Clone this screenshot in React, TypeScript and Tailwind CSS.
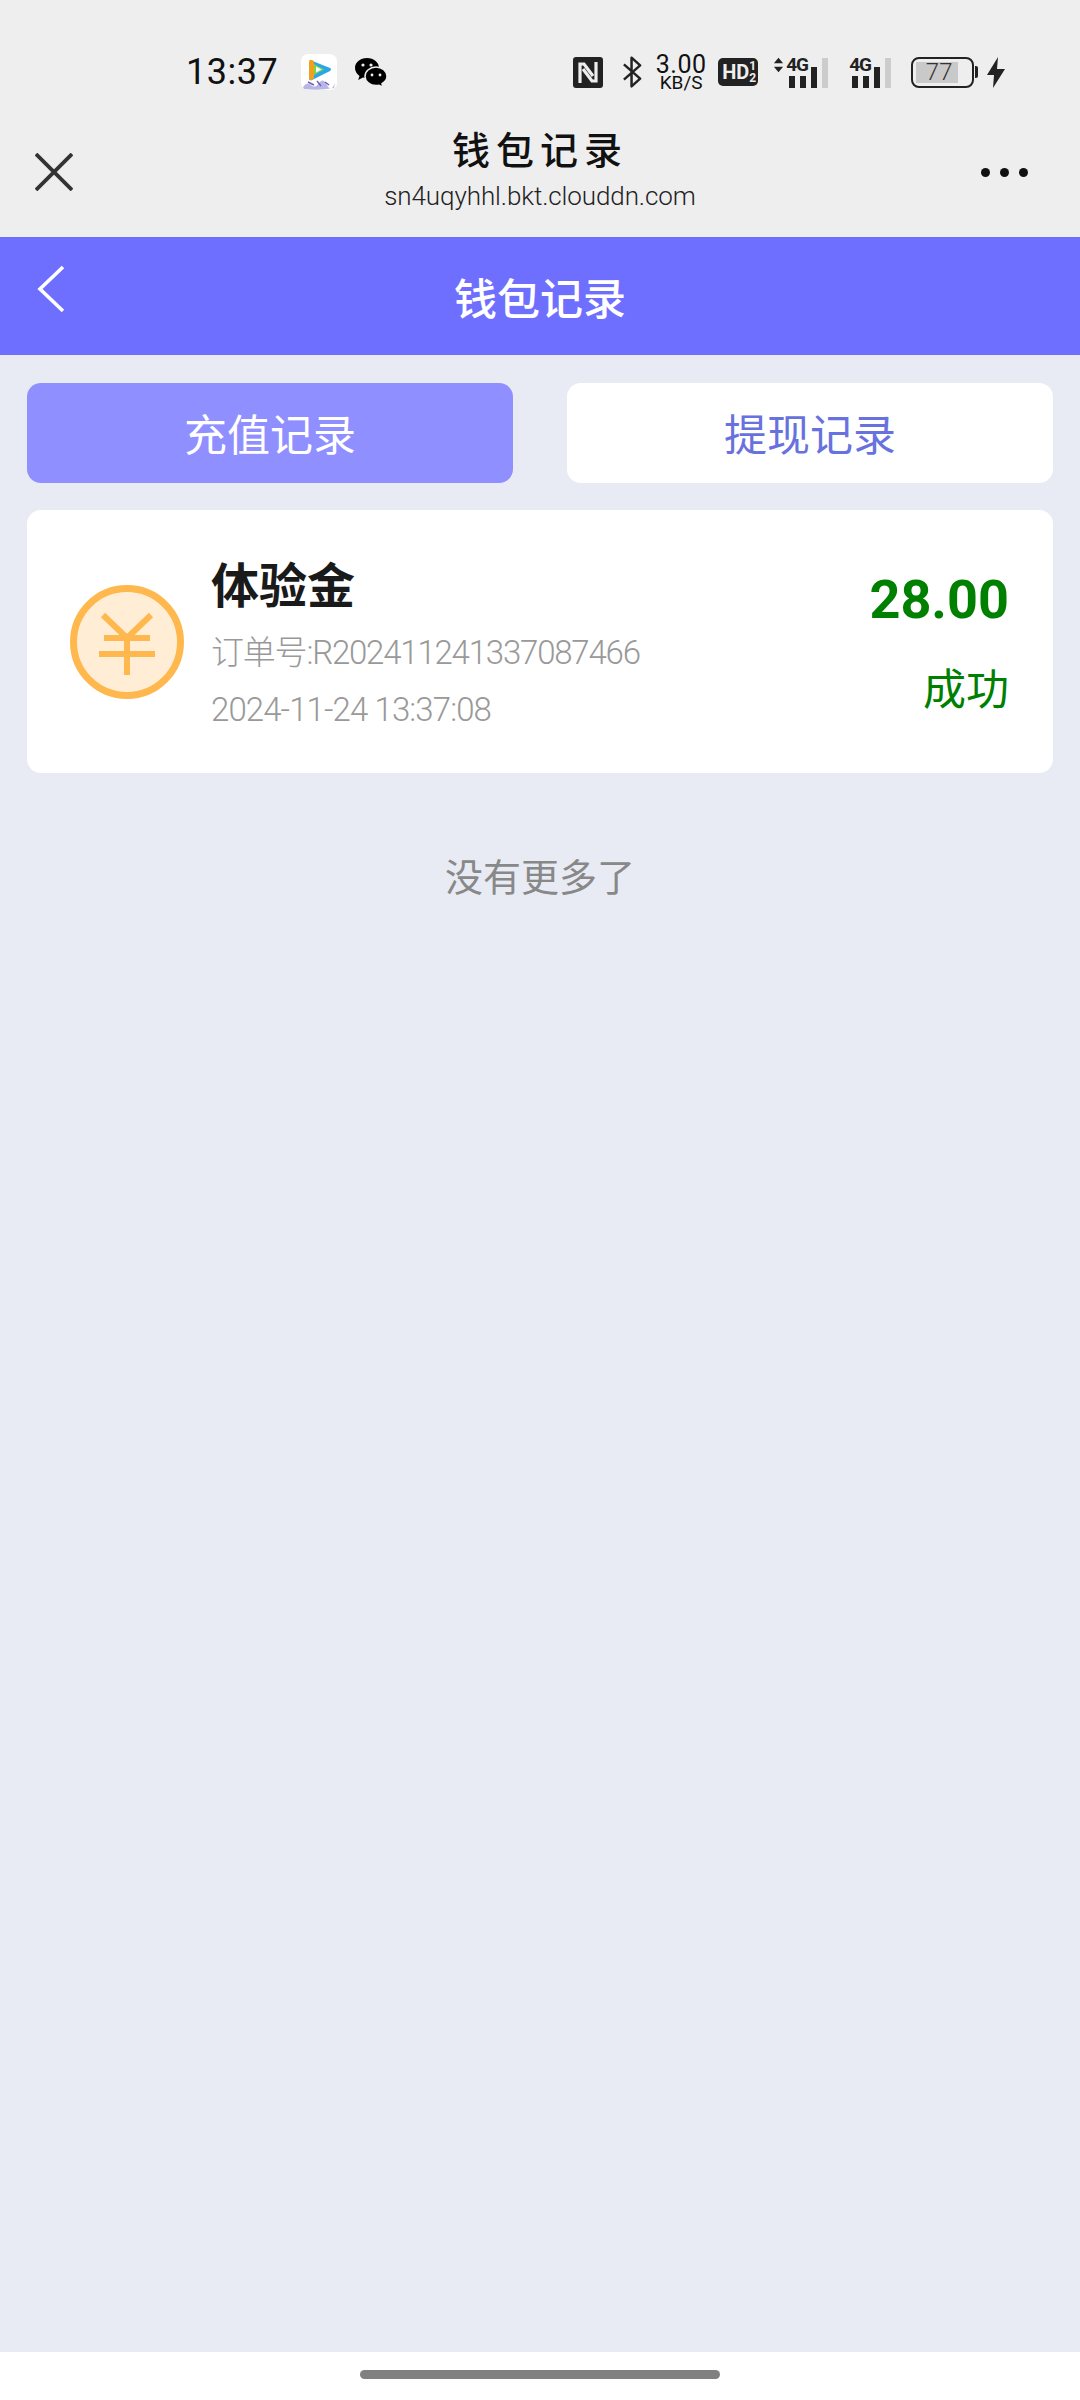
const CJK = '"Noto Sans CJK SC", "Noto Sans", sans-serif';
const LATIN = 'Roboto, "Noto Sans CJK SC", sans-serif';
const NARROW = '"Liberation Sans Narrow", Roboto, sans-serif';

function AppIcon() {
  return (
    <svg width="36" height="36" viewBox="0 0 36 36" className="ml-[23px]">
      <rect width="36" height="36" rx="7" fill="#fff" />
      <path d="M9 6 L29 14 Q31 15 29 17 L11 26 Q8 27 8 24 Z" fill="#2aa6e8" />
      <path d="M8 8 Q8 5 11 6 L13 7 L13 24 L11 26 Q8 27 8 24 Z" fill="#f0a020" />
      <path d="M13 10 L23 15.5 L13 21 Z" fill="#7ed348" />
      <path d="M15 12.5 L20.5 15.5 L15 18.5 Z" fill="#fff" />
      <path d="M2 33 Q6 27 10 31 T18 29 T26 31 T34 29 L33 34 Q18 37 3 35 Z" fill="#b9b6e6" />
      <path d="M7 28 L13 31 M16 27 L20 32 M24 28 L28 31" stroke="#6a5fb8" strokeWidth="1.4" />
    </svg>
  );
}

function WechatIcon() {
  return (
    <svg width="34" height="30" viewBox="0 0 34 30" className="ml-[17px]">
      <path d="M13 1C6 1 1 5.500 1 11c0 3.300 1.800 6 4.500 8L4.200 23 9 20.500c1.300.4 2.600.6 4 .6C20 21.100 25 16.500 25 11S20 1 13 1z" fill="#000" />
      <path d="M22 10c-6 0-11 4.100-11 9.300s5 9.300 11 9.300c1 0 2-.1 3-.4l4 2-1-3.500c3-1.700 5-4.400 5-7.400C33 14.100 28 10 22 10z" fill="#000" stroke="#eeeeee" strokeWidth="1.500" />
      <circle cx="9" cy="8" r="1.600" fill="#eee" />
      <circle cx="17" cy="8" r="1.600" fill="#eee" />
      <circle cx="18" cy="18" r="1.400" fill="#eee" />
      <circle cx="26" cy="18" r="1.400" fill="#eee" />
    </svg>
  );
}

function NfcIcon() {
  return (
    <svg width="30" height="31" viewBox="0 0 30 31">
      <rect width="30" height="31" rx="3" fill="#222" />
      <path d="M7 26V7h4l9 12" fill="none" stroke="#eee" strokeWidth="3.200" />
      <path d="M23 5v19h-4l-9-12" fill="none" stroke="#eee" strokeWidth="3.200" />
    </svg>
  );
}

function BluetoothIcon() {
  return (
    <svg width="21" height="34" viewBox="0 0 22 34" className="ml-[19px]">
      <path d="M2 9 L19 24 L10 32 V2 L19 10 L2 25" fill="none" stroke="#222" strokeWidth="2.600" strokeLinejoin="round" />
    </svg>
  );
}

function Signal({ arrows }: { arrows?: boolean }) {
  return (
    <div className="relative flex h-[31px] w-[46px] items-end gap-[5px] pl-[3px]">
      <span className="h-[12px] w-[6px] bg-[#222]" />
      <span className="h-[12px] w-[6px] bg-[#222]" />
      <span className="h-[21px] w-[6px] bg-[#222]" />
      <span className="h-[30px] w-[6px] bg-[#ccc]" />
      <span className="absolute left-0 top-[-2px] text-[19px] font-bold leading-[20px] tracking-[-1px] text-[#222]" style={{ fontFamily: NARROW }}>
        4G
      </span>
      {arrows && (
        <svg width="11" height="16" viewBox="0 0 12 16" className="absolute left-[-13px] top-0">
          <path d="M6 0l5 6H1zM6 16l5-6H1z" fill="#222" />
        </svg>
      )}
    </div>
  );
}

function Battery() {
  return (
    <div className="ml-[16px] flex items-center">
      <div className="flex h-[31px] w-[63px] items-center rounded-[8px] border-[2px] border-[#222] pl-[3px]">
        <div className="flex h-[21px] w-[42px] items-center justify-center bg-[#c9c9c9] text-[24px] font-light text-[#333]" style={{ fontFamily: LATIN }}>
          <span className="ml-[4px]">77</span>
        </div>
      </div>
      <span className="ml-[1px] h-[12px] w-[3px] rounded-r-[2px] bg-[#222]" />
      <svg width="20" height="31" viewBox="0 0 20 31" className="ml-[8px]">
        <path d="M12 0 L1 18 H8 L7 31 L19 12 H11 Z" fill="#222" />
      </svg>
    </div>
  );
}

function YuanIcon() {
  return (
    <svg width="116" height="116" viewBox="0 0 116 116" className="shrink-0">
      <circle cx="58" cy="58" r="53.500" fill="#ffeed5" stroke="#ffb84d" strokeWidth="7" />
      <path d="M34 31 L58 54 L82 31 M35 54 H81 M30 70 H86 M58 54 V91" fill="none" stroke="#ffb84d" strokeWidth="6" />
    </svg>
  );
}

export default function App() {
  return (
    <div className="flex h-[2400px] w-[1080px] flex-col overflow-hidden bg-[#e8ebf3]" style={{ fontFamily: CJK }}>
      <header className="h-[237px] shrink-0 bg-[#eeeeee]">
        <div className="flex h-[96px] items-center pt-[48px]">
          <span className="ml-[186px] text-[36px] leading-none tracking-[0.5px] text-[#111]" style={{ fontFamily: LATIN }}>
            13:37
          </span>
          <AppIcon />
          <WechatIcon />
          <div className="ml-[185px] flex items-center">
            <NfcIcon />
            <BluetoothIcon />
            <div className="ml-[13px] flex w-[50px] flex-col items-center text-[#111]" style={{ fontFamily: LATIN }}>
              <span className="text-[25px] leading-[21px] tracking-[0.5px]">3.00</span>
              <span className="text-[19px] leading-[16px]">KB/S</span>
            </div>
            <div className="ml-[12px] flex h-[28px] w-[40px] items-center rounded-[5px] bg-[#222] pl-[4px] text-[20px] font-bold leading-none text-[#eee]" style={{ fontFamily: NARROW }}>
              HD
              <span className="flex flex-col text-[12px] leading-[12px]">
                <span>1</span>
                <span>2</span>
              </span>
            </div>
            <div className="ml-[28px]">
              <Signal arrows />
            </div>
            <div className="ml-[17px]">
              <Signal />
            </div>
            <Battery />
          </div>
        </div>
        <div className="flex items-start pt-[27px]">
          <div className="w-[140px] shrink-0 pl-[35px] pt-[30px]">
            <svg width="38" height="38" viewBox="0 0 38 38">
              <path d="M1 1 L37 37 M37 1 L1 37" stroke="#333" strokeWidth="3.800" />
            </svg>
          </div>
          <div className="flex flex-1 flex-col items-center">
            <span className="text-[38px] font-medium leading-[50px] tracking-[6px] text-[#111]">钱包记录</span>
            <span className="mt-[8px] text-[26px] font-light leading-[30px] tracking-[-0.1px] text-[#222]" style={{ fontFamily: LATIN }}>
              sn4uqyhhl.bkt.clouddn.com
            </span>
          </div>
          <div className="flex w-[140px] shrink-0 justify-end gap-[10px] pr-[52px] pt-[45px]">
            <span className="h-[9px] w-[9px] rounded-full bg-[#111]" />
            <span className="h-[9px] w-[9px] rounded-full bg-[#111]" />
            <span className="h-[9px] w-[9px] rounded-full bg-[#111]" />
          </div>
        </div>
      </header>

      <div className="relative flex h-[118px] shrink-0 items-center justify-center bg-[#6f6fff]">
        <svg width="30" height="48" viewBox="0 0 30 48" className="absolute left-[36px] top-[28px]">
          <path d="M27 2 L4 24 L27 46" fill="none" stroke="#fff" strokeWidth="3.600" />
        </svg>
        <span className="text-[43px] font-medium text-white">钱包记录</span>
      </div>

      <div className="flex gap-[54px] px-[27px] pt-[28px]">
        <div className="flex h-[100px] flex-1 items-center justify-center rounded-[14px] bg-[#8f8fff] pb-[2px] text-[43px] text-white">
          充值记录
        </div>
        <div className="flex h-[100px] flex-1 items-center justify-center rounded-[14px] bg-white pb-[2px] text-[43px] text-[#6872de]">
          提现记录
        </div>
      </div>

      <div className="mx-[27px] mt-[27px] flex h-[263px] items-center rounded-[14px] bg-white pl-[42px] pr-[44px]">
        <YuanIcon />
        <div className="ml-[26px] flex flex-1 flex-col pt-[14px]">
          <span className="mt-[-10px] text-[48px] font-bold leading-[60px] text-[#1a1a1a]">体验金</span>
          <span className="mt-[16px] text-[33px] font-light leading-[50px] tracking-[-1.200px] text-[#999999]" style={{ fontFamily: LATIN }}>
            订单号:R202411241337087466
          </span>
          <span className="mt-[7px] text-[33px] font-light leading-[50px] tracking-[-0.900px] text-[#999999]" style={{ fontFamily: LATIN }}>
            2024-11-24 13:37:08
          </span>
        </div>
        <div className="flex flex-col items-end">
          <span className="text-[54px] font-bold leading-[60px] text-[#008000]" style={{ fontFamily: LATIN }}>
            28.00
          </span>
          <span className="mt-[28px] text-[43px] leading-[56px] text-[#008000]">成功</span>
        </div>
      </div>

      <div className="mt-[75px] text-center text-[38px] leading-[54px] text-[#888888]">没有更多了</div>

      <div className="mt-auto flex h-[48px] justify-center bg-white pt-[18px]">
        <span className="h-[9px] w-[360px] rounded-full bg-[#808080]" />
      </div>
    </div>
  );
}
